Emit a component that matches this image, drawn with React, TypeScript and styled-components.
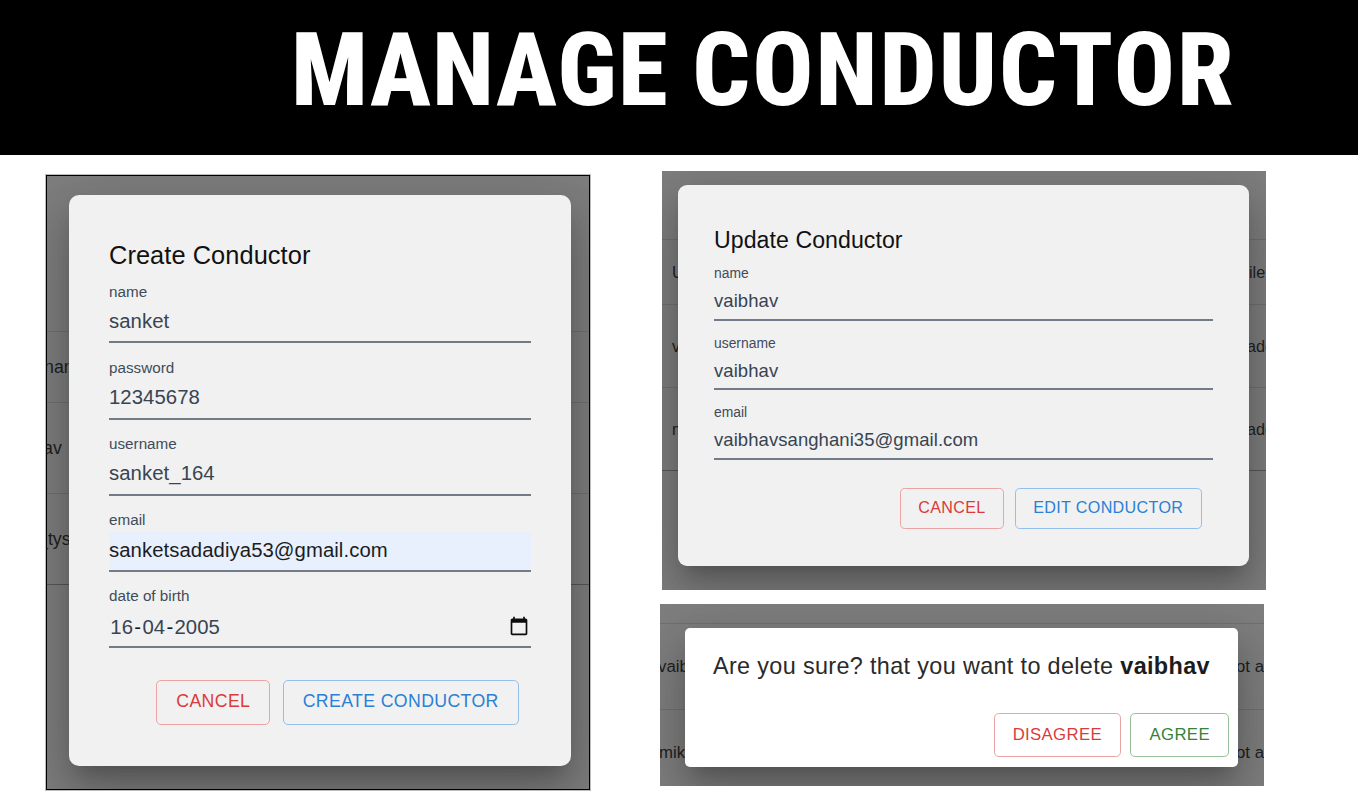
import React from "react";
import styled, { createGlobalStyle, css } from "styled-components";

const GlobalStyle = createGlobalStyle`
  *, *::before, *::after { box-sizing: border-box; }
  body {
    margin: 0;
    background: #fff;
    font-family: "Liberation Sans", Arial, sans-serif;
  }
`;

/* Lengths inside a captured panel are multiples of the panel's own zoom unit. */
const u = (n: number) => `calc(var(--u) * ${n})`;

const Page = styled.div`
  width: 1358px;
  height: 798px;
  overflow: hidden;
  background: #fff;
`;

const Banner = styled.header`
  height: 155px;
  padding: 21px 0 0 291px;
  background: #000;
`;

const Heading = styled.h1`
  margin: 0;
  color: #fff;
  font-family: "Roboto Condensed", Roboto, "Liberation Sans", sans-serif;
  font-size: 101.5px;
  font-stretch: 75%;
  font-weight: 800;
  line-height: 100px;
  letter-spacing: 1.1px;
  word-spacing: -1px;
  white-space: nowrap;
`;

const HeadingWord = styled.span`
  letter-spacing: 2px;
`;

const Content = styled.main`
  display: flex;
  align-items: flex-start;
  padding: 16px 0 0 45px;
`;

const RightColumn = styled.div`
  display: flex;
  flex-direction: column;
  gap: 14px;
  margin-left: 71px;
`;

const Panel = styled.section<{ $unit: number; $w: number; $h: number; $framed?: boolean }>`
  --u: ${(p) => p.$unit}px;
  display: grid;
  grid-template: 100% / 100%;
  width: ${(p) => p.$w}px;
  height: ${(p) => p.$h}px;
  overflow: hidden;
  background: #7e7e7e;
  ${(p) =>
    p.$framed &&
    css`
      margin: 4px 1px 0;
      border: 1px solid #000;
      box-shadow: 0 0 0 1px #bdbdbd;
    `}
`;

const Backdrop = styled.div<{ $top: number }>`
  grid-area: 1 / 1;
  display: flex;
  flex-direction: column;
  padding-top: ${(p) => p.$top}px;
  overflow: hidden;
`;

const TableRow = styled.div<{ $h: number; $line?: string }>`
  display: flex;
  flex: none;
  align-items: center;
  justify-content: space-between;
  height: ${(p) => p.$h}px;
  border-bottom: 1px solid ${(p) => p.$line ?? "#707070"};
  color: #1f1f1f;
  font-size: ${u(14)};
  white-space: nowrap;
`;

const Cell = styled.span<{ $pull?: number }>`
  margin-left: ${(p) => p.$pull ?? 0}px;
`;

const EndCell = styled.span<{ $w: number }>`
  width: ${(p) => p.$w}px;
`;

const Dialog = styled.div<{ $w: number; $h: number; $x: number; $y: number; $radius: number; $bg: string }>`
  grid-area: 1 / 1;
  z-index: 1;
  display: flex;
  flex-direction: column;
  width: ${(p) => p.$w}px;
  height: ${(p) => p.$h}px;
  margin: ${(p) => p.$y}px 0 0 ${(p) => p.$x}px;
  border-radius: ${(p) => p.$radius}px;
  background: ${(p) => p.$bg};
  box-shadow:
    0 ${u(11)} ${u(15)} ${u(-7)} rgba(0, 0, 0, 0.2),
    0 ${u(24)} ${u(38)} ${u(3)} rgba(0, 0, 0, 0.14),
    0 ${u(9)} ${u(46)} ${u(8)} rgba(0, 0, 0, 0.12);
`;

const FormBody = styled.div<{ $side: number }>`
  display: flex;
  flex-direction: column;
  padding: ${u(37.6)} ${(p) => p.$side}px 0;
`;

const FormTitle = styled.h2`
  margin: 0 0 ${u(-0.8)};
  color: #111;
  font-size: ${u(20)};
  font-weight: 400;
  line-height: ${u(20.5)};
  letter-spacing: ${u(0.05)};
`;

const Field = styled.label`
  display: flex;
  flex-direction: column;
  height: ${u(60)};
  padding-top: ${u(12)};
`;

const FieldName = styled.span`
  color: #414c59;
  font-size: ${u(12)};
  line-height: ${u(14.2)};
`;

const FieldValue = styled.span<{ $filled?: boolean }>`
  display: flex;
  justify-content: space-between;
  height: ${u(31.8)};
  margin-top: auto;
  padding-top: ${u(4.7)};
  border-bottom: 2px solid #717c88;
  background: ${(p) => (p.$filled ? "#e8f0fe" : "transparent")};
  color: ${(p) => (p.$filled ? "#1b1d22" : "#384452")};
  font-size: ${u(16)};
  line-height: ${u(20.4)};
  letter-spacing: ${u(0.055)};
`;

const DateValue = styled.span`
  padding-top: ${u(0.6)};
`;

const DatePart = styled.span`
  padding: 0 ${u(1)};
`;

const DateDash = styled.span`
  color: #10151b;
`;

const CalendarIcon = styled.svg`
  flex: none;
  width: 20px;
  height: 20px;
  margin: 2.5px 2px 0 0;
  fill: #0b0b0d;
`;

const Actions = styled.div<{ $top: string; $right: string; $gap: string }>`
  display: flex;
  justify-content: flex-end;
  gap: ${(p) => p.$gap};
  margin-top: ${(p) => p.$top};
  padding-right: ${(p) => p.$right};
`;

const tones = {
  red: ["#d93b3b", "#eca3a3"],
  blue: ["#2a7fd6", "#94bfea"],
  green: ["#35823a", "#95c098"],
};

const Button = styled.button<{ $tone: keyof typeof tones; $h?: number; $drop?: number }>`
  height: ${(p) => u(p.$h ?? 35.4)};
  padding: 0 ${u(15.1)} ${(p) => u(p.$drop ?? 1)};
  border: 1px solid ${(p) => tones[p.$tone][1]};
  border-radius: ${u(4)};
  background: transparent;
  color: ${(p) => tones[p.$tone][0]};
  font: 400 ${u(13.95)} "Liberation Sans", Arial, sans-serif;
  letter-spacing: ${u(0.29)};
  white-space: nowrap;
`;

const Question = styled.p`
  margin: 0;
  padding: 24px 0 0 28px;
  color: #2a2a2a;
  font-size: 23.4px;
  line-height: 28px;
  letter-spacing: 0.35px;
  white-space: nowrap;
`;

const Name = styled.strong`
  color: #1c1c1c;
  font-weight: 700;
`;

function TextField({ name, value, filled }: { name: string; value: React.ReactNode; filled?: boolean }) {
  return (
    <Field>
      <FieldName>{name}</FieldName>
      <FieldValue $filled={filled}>{value}</FieldValue>
    </Field>
  );
}

function CreatePanel() {
  return (
    <Panel $unit={1.27} $w={544} $h={615} $framed>
      <Backdrop $top={84}>
        <TableRow $h={72} />
        <TableRow $h={71}>
          <Cell $pull={-3}>name</Cell>
        </TableRow>
        <TableRow $h={91}>
          <Cell $pull={-4}>av</Cell>
        </TableRow>
        <TableRow $h={91} $line="#575757">
          <Cell $pull={-9}>_tysa</Cell>
        </TableRow>
      </Backdrop>
      <Dialog $x={22} $y={18.5} $w={502} $h={571} $radius={10} $bg="#f1f1f1">
        <FormBody $side={40}>
          <FormTitle>Create Conductor</FormTitle>
          <TextField name="name" value="sanket" />
          <TextField name="password" value="12345678" />
          <TextField name="username" value="sanket_164" />
          <TextField name="email" value="sanketsadadiya53@gmail.com" filled />
          <TextField
            name="date of birth"
            value={
              <>
                <DateValue>
                  <DatePart>16</DatePart>
                  <DateDash>-</DateDash>
                  <DatePart>04</DatePart>
                  <DateDash>-</DateDash>
                  <DatePart>2005</DatePart>
                </DateValue>
                <CalendarIcon viewBox="0 0 24 24">
                  <path d="M20 3h-1V1h-2v2H7V1H5v2H4c-1.1 0-2 .9-2 2v16c0 1.1.9 2 2 2h16c1.1 0 2-.9 2-2V5c0-1.1-.9-2-2-2zm0 18H4V8h16v13z" />
                </CalendarIcon>
              </>
            }
          />
          <Actions $top={u(25)} $right={u(9.5)} $gap={u(9.5)}>
            <Button $tone="red">CANCEL</Button>
            <Button $tone="blue">CREATE CONDUCTOR</Button>
          </Actions>
        </FormBody>
      </Dialog>
    </Panel>
  );
}

function UpdatePanel() {
  return (
    <Panel $unit={1.157} $w={604} $h={419}>
      <Backdrop $top={0}>
        <TableRow $h={69} />
        <TableRow $h={65}>
          <Cell $pull={10}>Us</Cell>
          <EndCell $w={17}>ile</EndCell>
        </TableRow>
        <TableRow $h={83}>
          <Cell $pull={10}>va</Cell>
          <EndCell $w={19}>add</EndCell>
        </TableRow>
        <TableRow $h={83} $line="#575757">
          <Cell $pull={10}>m</Cell>
          <EndCell $w={19}>add</EndCell>
        </TableRow>
      </Backdrop>
      <Dialog $x={16} $y={14} $w={571} $h={380.5} $radius={9} $bg="#f1f1f1">
        <FormBody $side={36}>
          <FormTitle>Update Conductor</FormTitle>
          <TextField name="name" value="vaibhav" />
          <TextField name="username" value="vaibhav" />
          <TextField name="email" value="vaibhavsanghani35@gmail.com" />
          <Actions $top={u(25)} $right={u(9.7)} $gap={u(9.2)}>
            <Button $tone="red" $drop={1.7}>CANCEL</Button>
            <Button $tone="blue" $drop={1.7}>EDIT CONDUCTOR</Button>
          </Actions>
        </FormBody>
      </Dialog>
    </Panel>
  );
}

const DeleteSlot = styled.div`
  margin-left: -2px;
`;

function DeletePanel() {
  return (
    <DeleteSlot>
      <Panel $unit={1.2} $w={604} $h={182}>
        <Backdrop $top={0}>
          <TableRow $h={20} />
          <TableRow $h={86}>
            <Cell $pull={-2}>vaib</Cell>
            <EndCell $w={28}>ot a</EndCell>
          </TableRow>
          <TableRow $h={86}>
            <Cell $pull={-1}>mik</Cell>
            <EndCell $w={28}>ot a</EndCell>
          </TableRow>
        </Backdrop>
        <Dialog $x={25} $y={23.5} $w={553} $h={139} $radius={5} $bg="#fff">
          <Question>
            Are you sure? that you want to delete <Name>vaibhav</Name>
          </Question>
          <Actions $top="33.5px" $right="9px" $gap="9.4px">
            <Button $tone="red" $h={36.5} $drop={0}>DISAGREE</Button>
            <Button $tone="green" $h={36.5} $drop={0}>AGREE</Button>
          </Actions>
        </Dialog>
      </Panel>
    </DeleteSlot>
  );
}

export default function App() {
  return (
    <Page>
      <GlobalStyle />
      <Banner>
        <Heading>
          MANAGE <HeadingWord>CONDUCTOR</HeadingWord>
        </Heading>
      </Banner>
      <Content>
        <CreatePanel />
        <RightColumn>
          <UpdatePanel />
          <DeletePanel />
        </RightColumn>
      </Content>
    </Page>
  );
}
